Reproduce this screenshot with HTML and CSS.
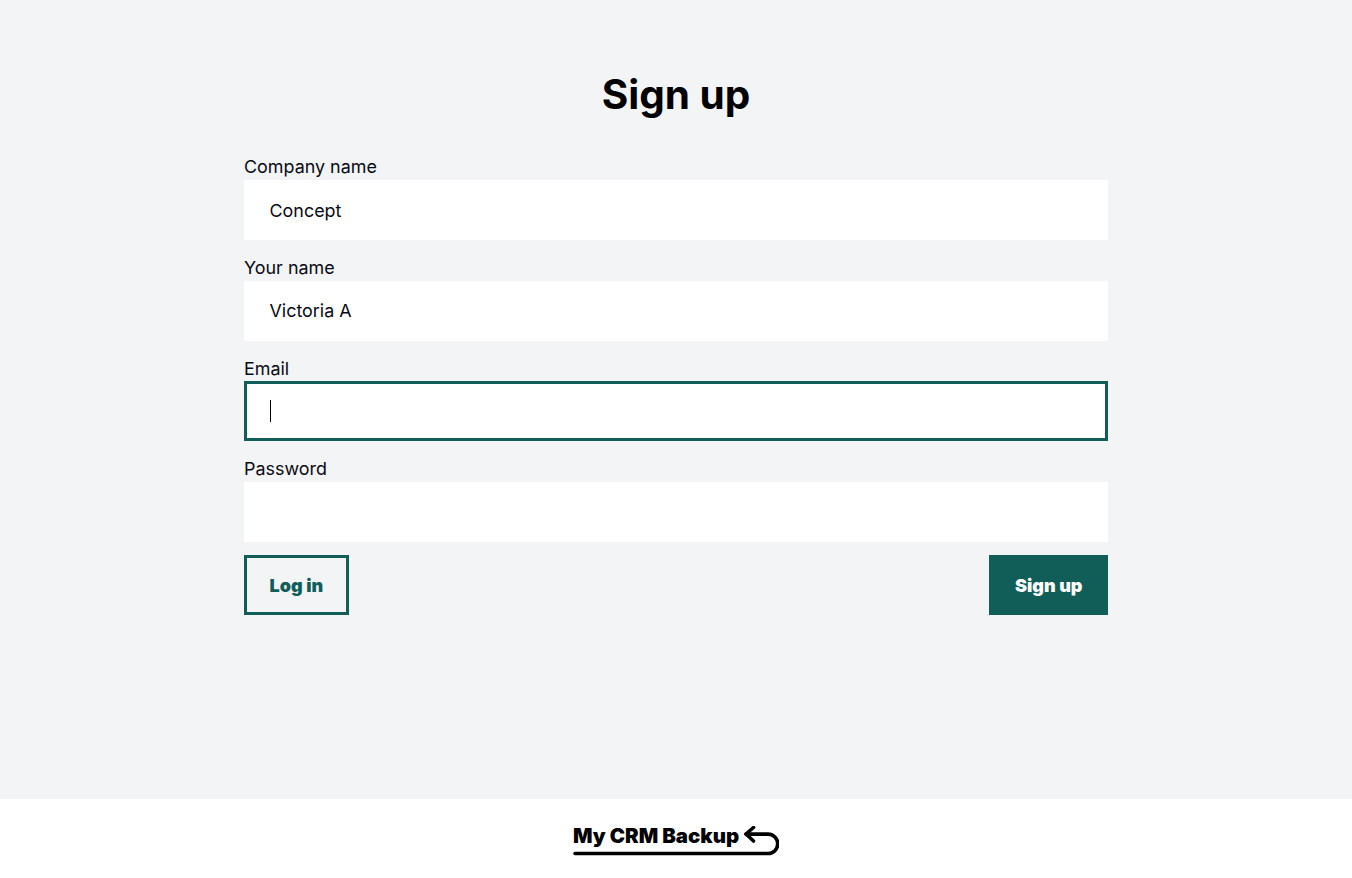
FILE: index.html
```html
<!DOCTYPE html>
<html lang="en">
<head>
    <meta charset="UTF-8">
    <meta name="viewport" content="width=device-width, initial-scale=1.0">
    <title>Sign up</title>
    <link rel="stylesheet" href="styles.css">
</head>
<body>
    <main class="content">
        <h1 class="title">Sign up</h1>
        <form class="signup-form">
            <div class="field">
                <label class="field-label">Company name</label>
                <div class="field-input">Concept</div>
            </div>
            <div class="field">
                <label class="field-label">Your name</label>
                <div class="field-input">Victoria A</div>
            </div>
            <div class="field">
                <label class="field-label">Email</label>
                <div class="field-input focused"><span class="caret"></span></div>
            </div>
            <div class="field">
                <label class="field-label">Password</label>
                <div class="field-input"></div>
            </div>
            <div class="actions">
                <button type="button" class="btn btn-outline">Log in</button>
                <button type="button" class="btn btn-solid">Sign up</button>
            </div>
        </form>
    </main>
    <footer class="footer">
        <div class="logo">
            <span class="logo-text">My CRM Backup</span>
            <svg class="logo-mark" width="206" height="30" viewBox="0 0 206 30" fill="none" stroke="#000" stroke-width="3.6" stroke-linecap="round" stroke-linejoin="round">
                <path d="M2 27.500H195a9.700 9.700 0 0 0 0-19.400H173"/>
                <path d="M180.500 1.500L173 8L180.500 15"/>
            </svg>
        </div>
    </footer>
</body>
</html>
```
FILE: styles.css
```css
* {
    box-sizing: border-box;
}
html, body {
    height: 100%;
}
body {
    margin: 0;
    display: flex;
    flex-direction: column;
    font-family: Inter, "Liberation Sans", sans-serif;
    background-color: #f3f4f6;
    color: #0a0a14;
}
.content {
    flex: 1;
    width: 864px;
    margin: 0 auto;
    padding-top: 71px;
}
.title {
    margin: 0 0 33.4px;
    font-size: 40.5px;
    line-height: 48px;
    font-weight: 700;
    text-align: center;
    color: #000;
}
.field {
    margin-bottom: 13px;
}
.field-label {
    display: block;
    font-size: 17.92px;
    line-height: 29px;
    margin-bottom: -1.4px;
}
.field-input {
    height: 60px;
    padding: 0.6px 25.5px 0;
    display: flex;
    align-items: center;
    background-color: #fff;
    font-size: 17.92px;
}
.field-input.focused {
    border: 3px solid #115e59;
    padding: 0 22.5px;
}
.caret {
    width: 1px;
    height: 22px;
    background-color: #000;
}
.actions {
    display: flex;
    justify-content: space-between;
}
.btn {
    height: 60px;
    padding: 1px 25.5px 0;
    font-family: Inter, "Liberation Sans", sans-serif;
    font-size: 18px;
    font-weight: 900;
    border: none;
    border-radius: 0;
    cursor: pointer;
}
.btn-outline {
    background: transparent;
    border: 3px solid #115e59;
    padding: 1px 22.5px 0;
    color: #115e59;
}
.btn-solid {
    background-color: #115e59;
    color: #fff;
}
.footer {
    height: 79px;
    background-color: #fff;
    display: flex;
    justify-content: center;
    padding-top: 24px;
}
.logo {
    position: relative;
    width: 206px;
    height: 34px;
}
.logo-text {
    display: block;
    font-size: 20.4px;
    line-height: 26px;
    font-weight: 900;
    color: #000;
    white-space: nowrap;
}
.logo-mark {
    position: absolute;
    left: 0;
    top: 3px;
}
```
